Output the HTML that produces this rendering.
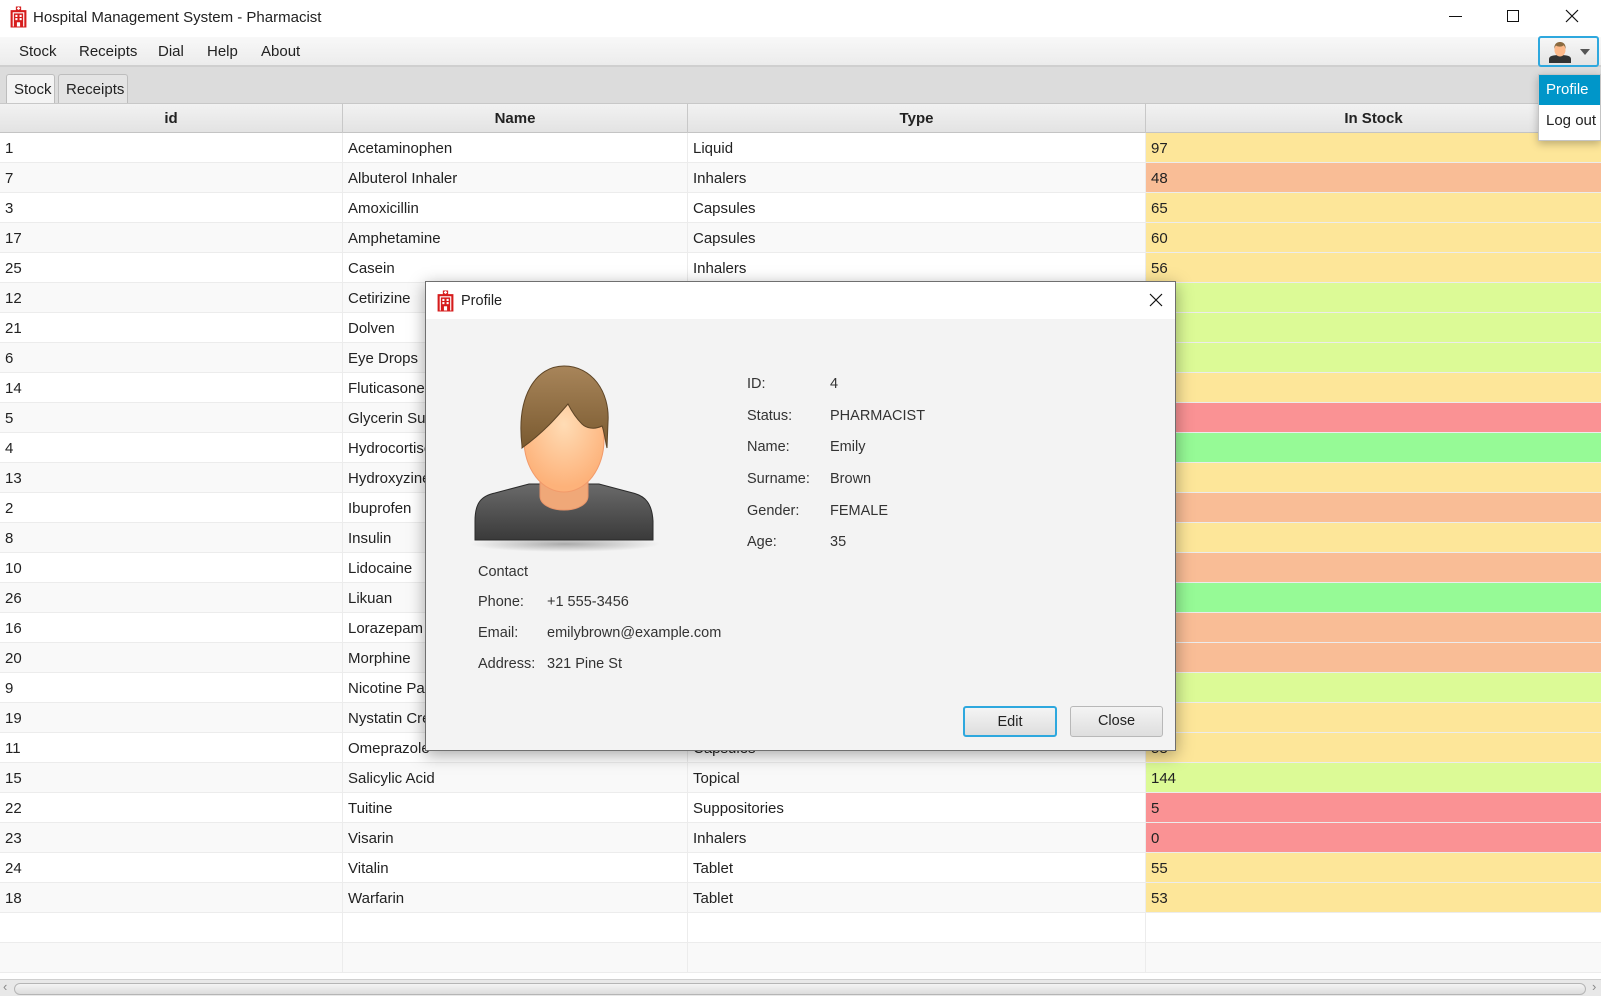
<!DOCTYPE html>
<html><head><meta charset="utf-8"><style>
*{margin:0;padding:0;box-sizing:border-box}
body{width:1601px;height:996px;overflow:hidden;background:#fff;font-family:"Liberation Sans",sans-serif;font-size:15px;color:#222;position:relative}
.abs{position:absolute}
#title{left:0;top:0;width:1601px;height:37px;background:#fff}
#menu{left:0;top:37px;width:1601px;height:30px;background:linear-gradient(#f8f8f8,#ececec);border-bottom:2px solid #cfcfcf}
#menu span{position:absolute;top:6px}
#tabs{left:0;top:67px;width:1601px;height:36px;background:#dcdcdc}
.tab{position:absolute;top:7px;height:29px;border:1px solid #bdbdbd;border-bottom:none;border-radius:3px 3px 0 0;padding:6px 6px 0 7px}
#hdr{left:0;top:103px;width:1601px;height:30px;background:linear-gradient(#f2f2f2,#e3e3e3);border-top:1px solid #c8c8c8;border-bottom:1px solid #c4c4c4;font-weight:bold}
#hdr div{position:absolute;top:0;height:29px;line-height:30px;text-align:center;border-right:1px solid #c8c8c8}
.row{position:absolute;left:0;width:1601px;height:30px;border-bottom:1px solid #ececec}
.row div{position:absolute;top:0;height:29px;line-height:31px;padding-left:5px}
.c1{left:0;width:343px;border-right:1px solid #ececec}
.c2{left:343px;width:345px;border-right:1px solid #ececec}
.c3{left:688px;width:458px;border-right:1px solid #ececec}
.c4{left:1146px;width:455px}
.y{background:#fde699}.o{background:#f9bd96}.g{background:#dcfa96}.r{background:#fa9294}.gr{background:#96fa96}
#dlg{left:425px;top:281px;width:751px;height:470px;background:#f3f3f3;border:1px solid #6f6f6f;box-shadow:0 4px 16px rgba(0,0,0,.35)}
#dlgt{left:0;top:0;width:749px;height:37px;background:#fff}
.lbl{position:absolute;font-size:14.5px;color:#333}
.btn{position:absolute;height:31px;border:1px solid #b8b8b8;border-radius:3px;background:linear-gradient(#f4f4f4,#dedede);text-align:center;line-height:29px;font-size:14.5px}
</style></head><body>
<div id="title" class="abs">
<svg class="abs" style="left:9px;top:6px" width="19" height="22" viewBox="0 0 18 20"><path d="M6.5 0h5v3.5h-5z M1.5 3.5h15v16.5h-15z" fill="#d61c1c"/><rect x="8.3" y="0.6" width="1.4" height="2.6" fill="#fff"/><rect x="7.5" y="1.3" width="3" height="1.2" fill="#fff"/><rect x="3.5" y="5.5" width="11" height="13.5" fill="#fff"/><rect x="4.6" y="6.6" width="8.8" height="12.4" fill="#d61c1c"/><g fill="#fff"><rect x="6" y="8" width="2" height="2"/><rect x="10" y="8" width="2" height="2"/><rect x="6" y="11" width="2" height="2"/><rect x="10" y="11" width="2" height="2"/><rect x="7.5" y="15" width="3" height="4"/></g></svg>
<span class="abs" style="left:33px;top:9px">Hospital Management System - Pharmacist</span>
<div class="abs" style="left:1449px;top:16px;width:13px;height:1px;background:#111"></div>
<div class="abs" style="left:1507px;top:10px;width:12px;height:12px;border:1px solid #111"></div>
<svg class="abs" style="left:1565px;top:9px" width="14" height="14"><path d="M1 1L13 13M13 1L1 13" stroke="#111" stroke-width="1.2"/></svg>
</div>
<div id="menu" class="abs"><span style="left:19px">Stock</span><span style="left:79px">Receipts</span><span style="left:158px">Dial</span><span style="left:207px">Help</span><span style="left:261px">About</span></div>
<div class="abs" style="left:1538px;top:36px;width:61px;height:31px;border:2px solid #2ea8de;border-radius:3px;background:linear-gradient(#f7f7f7,#e4e4e4)">
<svg class="abs" style="left:8px;top:3px" width="24" height="22" viewBox="0 0 24 22"><path d="M1 22v-4c0-3 4-4 11-4s11 1 11 4v4z" fill="#333"/><ellipse cx="12" cy="9" rx="5.5" ry="6.5" fill="#fdb98a"/><path d="M6.3 8C6 2 10 1 12 1s6 1 5.7 7c-1-3-2-4-2.5-3.5C14 6 10 6 8 4.5 7 5.5 6.5 7 6.3 8z" fill="#8a6a40"/></svg>
<svg class="abs" style="left:40px;top:11px" width="10" height="6"><path d="M0 0h10L5 6z" fill="#555"/></svg>
</div>
<div id="tabs" class="abs">
<div class="tab" style="left:6px;width:49px;background:#f4f4f4;height:30px">Stock</div>
<div class="tab" style="left:58px;width:70px;background:#e4e4e4">Receipts</div>
</div>
<div class="abs" style="left:1538px;top:74px;width:63px;height:67px;background:#fff;border:1px solid #c4c4c4;box-shadow:0 3px 8px rgba(0,0,0,.25);z-index:5">
<div style="height:30px;background:#0096c9;color:#fff;padding:6px 0 0 7px">Profile</div>
<div style="padding:7px 0 0 7px">Log out</div>
</div>
<div id="hdr" class="abs"><div style="left:0;width:343px">id</div><div style="left:343px;width:345px">Name</div><div style="left:688px;width:458px">Type</div><div style="left:1146px;width:455px;border:none">In Stock</div></div>
<div id="rows"></div>
<div class="abs" style="left:0;top:979px;width:1601px;height:17px;background:#e8e8e8;border-top:1px solid #d0d0d0">
<span class="abs" style="left:3px;top:-1px;color:#888;font-size:13px">‹</span>
<div class="abs" style="left:14px;top:3px;width:1572px;height:12px;border:1px solid #b5b5b5;border-radius:6px;background:linear-gradient(#f4f4f4,#dcdcdc)"></div>
<span class="abs" style="left:1592px;top:-1px;color:#888;font-size:13px">›</span>
</div>
<script>
var d=[[1,"Acetaminophen","Liquid",97,"y"],[7,"Albuterol Inhaler","Inhalers",48,"o"],[3,"Amoxicillin","Capsules",65,"y"],[17,"Amphetamine","Capsules",60,"y"],[25,"Casein","Inhalers",56,"y"],[12,"Cetirizine","Tablet",120,"g"],[21,"Dolven","Tablet",130,"g"],[6,"Eye Drops","Liquid",110,"g"],[14,"Fluticasone","Inhalers",70,"y"],[5,"Glycerin Suppositories","Suppositories",8,"r"],[4,"Hydrocortisone","Topical",200,"gr"],[13,"Hydroxyzine","Tablet",75,"y"],[2,"Ibuprofen","Tablet",40,"o"],[8,"Insulin","Liquid",62,"y"],[10,"Lidocaine","Topical",35,"o"],[26,"Likuan","Tablet",210,"gr"],[16,"Lorazepam","Tablet",30,"o"],[20,"Morphine","Liquid",25,"o"],[9,"Nicotine Patch","Topical",115,"g"],[19,"Nystatin Cream","Topical",66,"y"],[11,"Omeprazole","Capsules",58,"y"],[15,"Salicylic Acid","Topical",144,"g"],[22,"Tuitine","Suppositories",5,"r"],[23,"Visarin","Inhalers",0,"r"],[24,"Vitalin","Tablet",55,"y"],[18,"Warfarin","Tablet",53,"y"],["","","","",""],["","","","",""]];
var h="";d.forEach(function(r,i){var bg=i%2?"#f9f9f9":"#fff";h+='<div class="row" style="top:'+(133+i*30)+'px;background:'+bg+'"><div class="c1">'+r[0]+'</div><div class="c2">'+r[1]+'</div><div class="c3">'+r[2]+'</div><div class="c4 '+r[4]+'">'+r[3]+'</div></div>';});
document.getElementById("rows").innerHTML=h;
</script>
<div id="dlg" class="abs" style="z-index:10">
<div id="dlgt" class="abs">
<svg class="abs" style="left:10px;top:8px" width="19" height="22" viewBox="0 0 18 20"><path d="M6.5 0h5v3.5h-5z M1.5 3.5h15v16.5h-15z" fill="#d61c1c"/><rect x="8.3" y="0.6" width="1.4" height="2.6" fill="#fff"/><rect x="7.5" y="1.3" width="3" height="1.2" fill="#fff"/><rect x="3.5" y="5.5" width="11" height="13.5" fill="#fff"/><rect x="4.6" y="6.6" width="8.8" height="12.4" fill="#d61c1c"/><g fill="#fff"><rect x="6" y="8" width="2" height="2"/><rect x="10" y="8" width="2" height="2"/><rect x="6" y="11" width="2" height="2"/><rect x="10" y="11" width="2" height="2"/><rect x="7.5" y="15" width="3" height="4"/></g></svg>
<span class="abs" style="left:35px;top:11px;font-size:14.5px">Profile</span>
<svg class="abs" style="left:723px;top:11px" width="14" height="14"><path d="M1 1L13 13M13 1L1 13" stroke="#111" stroke-width="1.2"/></svg>
</div>
<svg class="abs" style="left:44px;top:80px" width="190" height="190" viewBox="0 -4 190 190">
<defs><radialGradient id="sk" cx=".5" cy=".35" r=".6"><stop offset="0" stop-color="#ffdcb5"/><stop offset="1" stop-color="#fdb27a"/></radialGradient><linearGradient id="sh" x1="0" y1="0" x2="0" y2="1"><stop offset="0" stop-color="#6a6a6a"/><stop offset="1" stop-color="#3a3a3a"/></linearGradient><radialGradient id="sd"><stop offset="0" stop-color="rgba(0,0,0,.3)"/><stop offset="1" stop-color="rgba(0,0,0,0)"/></radialGradient><linearGradient id="hr" x1="0" y1="0" x2="0" y2="1"><stop offset="0" stop-color="#a8855a"/><stop offset="1" stop-color="#7a5a30"/></linearGradient></defs>
<ellipse cx="95" cy="178" rx="95" ry="8" fill="url(#sd)"/>
<path d="M5 174V155c0-18 6-25 20-28l34-9h70l34 9c12 3 19 10 20 28v19z" fill="url(#sh)" stroke="#2a2a2a"/>
<path d="M70 108h48v22c0 8-10 14-24 14s-24-6-24-14z" fill="#f0a878" stroke="#e8956a"/>
<ellipse cx="94" cy="74" rx="40" ry="52" fill="url(#sk)" stroke="#f29a6a"/>
<path d="M52 80C46 30 66 0 94 0s46 26 44 56l-1 26c-2-8-3-18-5-22-8 4-16 2-20-2-6-6-10-12-14-20-12 14-24 28-46 44z" fill="url(#hr)" stroke="#5e4526"/>
</svg>
<div class="lbl" style="left:321px;top:94px">ID:</div><div class="lbl" style="left:404px;top:94px">4</div>
<div class="lbl" style="left:321px;top:126px">Status:</div><div class="lbl" style="left:404px;top:126px">PHARMACIST</div>
<div class="lbl" style="left:321px;top:157px">Name:</div><div class="lbl" style="left:404px;top:157px">Emily</div>
<div class="lbl" style="left:321px;top:189px">Surname:</div><div class="lbl" style="left:404px;top:189px">Brown</div>
<div class="lbl" style="left:321px;top:221px">Gender:</div><div class="lbl" style="left:404px;top:221px">FEMALE</div>
<div class="lbl" style="left:321px;top:252px">Age:</div><div class="lbl" style="left:404px;top:252px">35</div>
<div class="lbl" style="left:52px;top:282px">Contact</div>
<div class="lbl" style="left:52px;top:312px">Phone:</div><div class="lbl" style="left:121px;top:312px">+1 555-3456</div>
<div class="lbl" style="left:52px;top:343px">Email:</div><div class="lbl" style="left:121px;top:343px">emilybrown@example.com</div>
<div class="lbl" style="left:52px;top:374px">Address:</div><div class="lbl" style="left:121px;top:374px">321 Pine St</div>
<div class="btn" style="left:537px;top:424px;width:94px;border:2px solid #2ea8de">Edit</div>
<div class="btn" style="left:644px;top:424px;width:93px">Close</div>
</div>
</body></html>
